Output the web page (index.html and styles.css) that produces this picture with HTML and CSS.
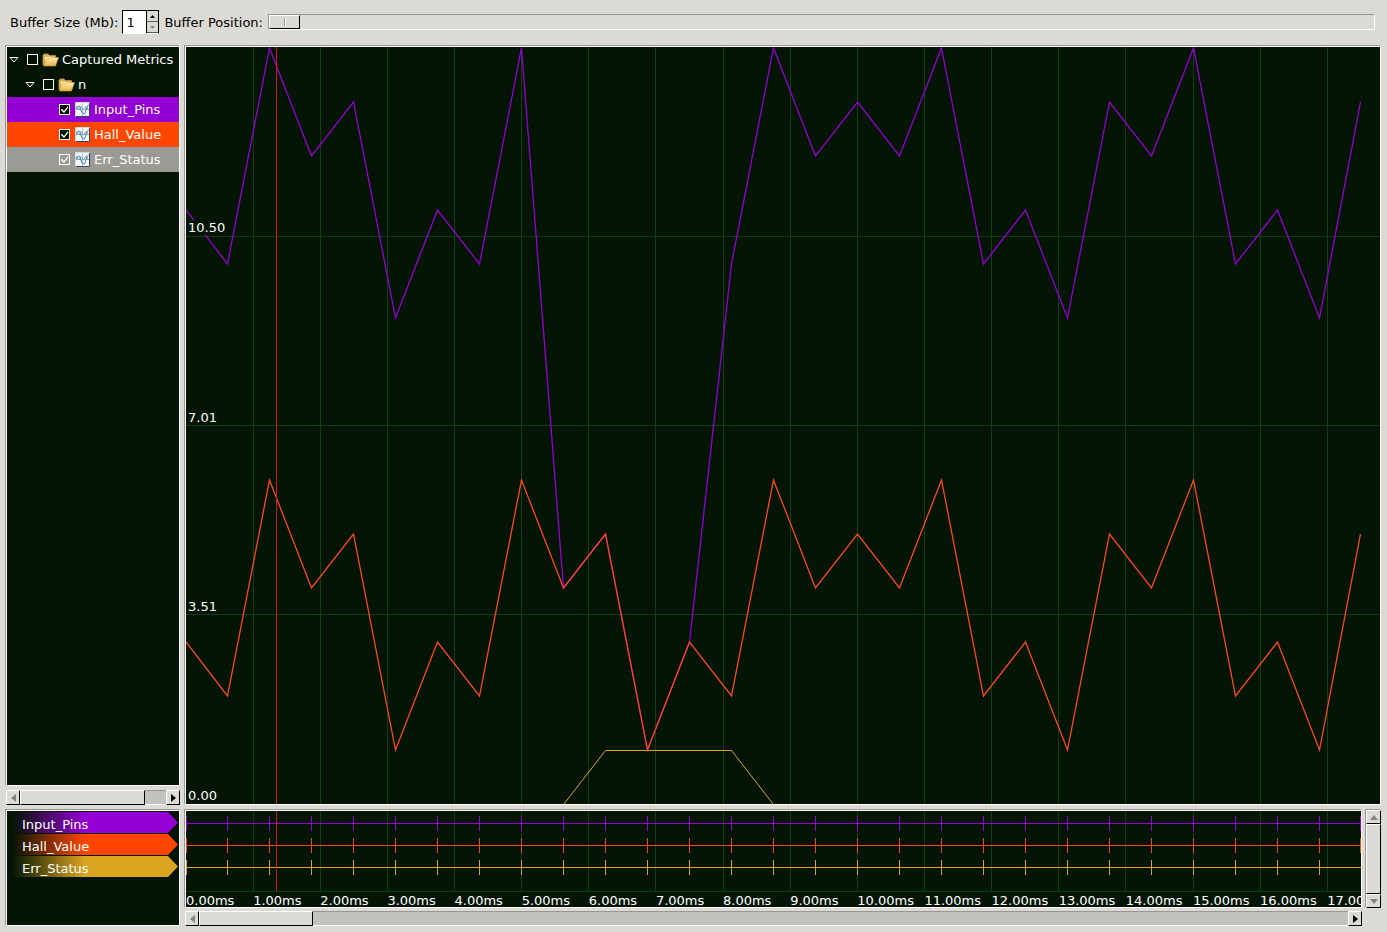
FILE: index.html
```html
<!DOCTYPE html>
<html lang="en">
<head>
<meta charset="utf-8">
<title>Captured Metrics</title>
<link rel="stylesheet" href="styles.css">
</head>
<body>
<svg class="defs" aria-hidden="true">
  <defs>
    <linearGradient id="folder-front" x1="0" y1="0" x2="0" y2="1">
      <stop offset="0" stop-color="#fff0a8"/>
      <stop offset="1" stop-color="#e8b04a"/>
    </linearGradient>
    <symbol id="folder" viewBox="0 0 17 14">
      <path d="M1 12V2.500L2 1H6L7.500 2.500H13.500V6" fill="#e3b358" stroke="#c08c34" stroke-width=".8"/>
      <path d="M3 4H13V7H3Z" fill="#fdf6d8"/>
      <path d="M1.500 13L4.500 5.500H8L9 4.500H16.500L13.500 13Z" fill="url(#folder-front)" stroke="#c8953a" stroke-width=".6"/>
    </symbol>
    <symbol id="signal" viewBox="0 0 15 15">
      <path d="M.5 .5H14.500V14.500H.5Z" fill="#f4f8fc" stroke="#cfd8e2"/>
      <path d="M14.500 1V14.500H1" fill="none" stroke="#39435c"/>
      <path d="M1 7.500H14M7.500 1V14" stroke="#b9c6d6" fill="none"/>
      <path d="M1.500 7.500C2.500 3 4.500 3 5.500 6.500S7.500 12 9 12 11.500 3.500 13.500 3" stroke="#2f6fb4" fill="none"/>
      <path d="M1.500 4.500L4 8L6 4.500L8.500 8L11 4.500L13.500 8" stroke="#58867f" stroke-width=".7" fill="none"/>
    </symbol>
  </defs>
</svg>

<header class="toolbar">
  <label for="size">Buffer Size (Mb):</label>
  <div class="spin">
    <input id="size" type="text" inputmode="numeric" value="1">
    <div class="spin-buttons">
      <button type="button" aria-label="Increase"><svg viewBox="0 0 5 3"><path d="M0 3L2.500 0L5 3Z"/></svg></button>
      <button type="button" aria-label="Decrease" disabled><svg viewBox="0 0 5 3"><path d="M0 0H5L2.500 3Z"/></svg></button>
    </div>
  </div>
  <label for="position">Buffer Position:</label>
  <input id="position" class="slider" type="range" min="0" max="100" value="0">
</header>

<main class="workspace">
  <section class="side">
    <div class="well tree">
      <div class="row">
        <svg class="expander" viewBox="0 0 10 6"><path d="M1 .5H9L5 5Z"/></svg>
        <label><input type="checkbox"><svg class="folder"><use href="#folder"/></svg>Captured Metrics</label>
      </div>
      <div class="row child">
        <svg class="expander" viewBox="0 0 10 6"><path d="M1 .5H9L5 5Z"/></svg>
        <label><input type="checkbox"><svg class="folder"><use href="#folder"/></svg>n</label>
      </div>
      <div class="row leaf violet"><label><input type="checkbox" checked><svg class="signal"><use href="#signal"/></svg>Input_Pins</label></div>
      <div class="row leaf orange"><label><input type="checkbox" checked><svg class="signal"><use href="#signal"/></svg>Hall_Value</label></div>
      <div class="row leaf muted"><label><input type="checkbox" checked><svg class="signal"><use href="#signal"/></svg>Err_Status</label></div>
    </div>
    <div class="scroll tree-scroll">
      <button type="button" aria-label="Scroll left" disabled><svg viewBox="0 0 5 8"><path d="M5 0V8L0 4Z"/></svg></button>
      <div class="thumb"></div>
      <div class="track"></div>
      <button type="button" aria-label="Scroll right"><svg viewBox="0 0 5 8"><path d="M0 0V8L5 4Z"/></svg></button>
    </div>
  </section>

  <section class="well chart">
    <svg viewBox="0 0 1194 757" preserveAspectRatio="none">
      <path class="grid" d="M67.500 0V757M134.500 0V757M201.500 0V757M268.500 0V757M335.500 0V757M402.500 0V757M469.500 0V757M537.500 0V757M604.500 0V757M671.500 0V757M738.500 0V757M805.500 0V757M872.500 0V757M939.500 0V757M1007.500 0V757M1074.500 0V757M1141.500 0V757M0 189.500H1194M0 378.500H1194M0 567.500H1194"/>
      <polyline class="line-violet" points="0,163 41.5,217 83.5,1 125.5,109 167.5,55 209.5,271 251.5,163 293.5,217 335.5,1 377.5,541 419.5,487 461.5,703 503.5,595 545.5,217 587.5,1 629.5,109 671.5,55 713.5,109 755.5,1 797.5,217 839.5,163 881.5,271 923.5,55 965.5,109 1007.5,1 1049.5,217 1091.5,163 1133.5,271 1174.5,55"/>
      <polyline class="line-yellow" points="0,757.5 377.5,757.5 419.5,703.5 545.5,703.5 587.5,757.5 1174.5,757.5"/>
      <polyline class="line-orange" points="0,595 41.5,649 83.5,433 125.5,541 167.5,487 209.5,703 251.5,595 293.5,649 335.5,433 377.5,541 419.5,487 461.5,703 503.5,595 545.5,649 587.5,433 629.5,541 671.5,487 713.5,541 755.5,433 797.5,649 839.5,595 881.5,703 923.5,487 965.5,541 1007.5,433 1049.5,649 1091.5,595 1133.5,703 1174.5,487"/>
      <path class="cursor" d="M90.500 0V757"/>
    </svg>
    <div class="values"><span>10.50</span><span>7.01</span><span>3.51</span><span>0.00</span></div>
  </section>

  <section class="well flags">
    <div class="flag flag-violet">Input_Pins</div>
    <div class="flag flag-orange">Hall_Value</div>
    <div class="flag flag-yellow">Err_Status</div>
  </section>

  <section class="timeline">
    <div class="well strip">
      <svg viewBox="0 0 1175 81" preserveAspectRatio="none">
        <defs>
          <path id="ticks" d="M0 0h1v15h-1zM41 0h1v15h-1zM83 0h1v15h-1zM125 0h1v15h-1zM167 0h1v15h-1zM209 0h1v15h-1zM251 0h1v15h-1zM293 0h1v15h-1zM335 0h1v15h-1zM377 0h1v15h-1zM419 0h1v15h-1zM461 0h1v15h-1zM503 0h1v15h-1zM545 0h1v15h-1zM587 0h1v15h-1zM629 0h1v15h-1zM671 0h1v15h-1zM713 0h1v15h-1zM755 0h1v15h-1zM797 0h1v15h-1zM839 0h1v15h-1zM881 0h1v15h-1zM923 0h1v15h-1zM965 0h1v15h-1zM1007 0h1v15h-1zM1049 0h1v15h-1zM1091 0h1v15h-1zM1133 0h1v15h-1z"/>
        </defs>
        <path class="grid" d="M67.500 0V81M134.500 0V81M201.500 0V81M268.500 0V81M335.500 0V81M402.500 0V81M469.500 0V81M537.500 0V81M604.500 0V81M671.500 0V81M738.500 0V81M805.500 0V81M872.500 0V81M939.500 0V81M1007.500 0V81M1074.500 0V81M1141.500 0V81M0 80.500H1175"/>
        <g class="trace trace-violet"><rect y="12" width="1175" height="1"/><use href="#ticks" y="5"/><rect x="1174" y="5" width="1" height="15"/></g>
        <g class="trace trace-orange"><rect y="34" width="1175" height="1"/><use href="#ticks" y="27"/><rect x="1174" y="27" width="1" height="15"/></g>
        <g class="trace trace-yellow"><rect y="56" width="1175" height="1"/><use href="#ticks" y="49"/></g>
        <path class="cursor" d="M90.500 0V80"/>
      </svg>
      <div class="times"><span>0.00ms</span><span>1.00ms</span><span>2.00ms</span><span>3.00ms</span><span>4.00ms</span><span>5.00ms</span><span>6.00ms</span><span>7.00ms</span><span>8.00ms</span><span>9.00ms</span><span>10.00ms</span><span>11.00ms</span><span>12.00ms</span><span>13.00ms</span><span>14.00ms</span><span>15.00ms</span><span>16.00ms</span><span>17.00</span></div>
    </div>
    <div class="scroll vertical">
      <button type="button" aria-label="Scroll up" disabled><svg viewBox="0 0 8 5"><path d="M0 5L4 0L8 5Z"/></svg></button>
      <div class="thumb"></div>
      <button type="button" aria-label="Scroll down" disabled><svg viewBox="0 0 8 5"><path d="M0 0H8L4 5Z"/></svg></button>
    </div>
    <div class="scroll time-scroll">
      <button type="button" aria-label="Scroll back" disabled><svg viewBox="0 0 5 8"><path d="M5 0V8L0 4Z"/></svg></button>
      <div class="thumb"></div>
      <div class="track"></div>
      <button type="button" aria-label="Scroll forward"><svg viewBox="0 0 5 8"><path d="M0 0V8L5 4Z"/></svg></button>
    </div>
  </section>
</main>
</body>
</html>
```
FILE: styles.css
```css
:root {
  --face: #dcdad5;
  --shade: #98968f;
  --trough: #c4c2bd;
  --screen: #051505;
  --violet: #9400d3;
  --orange: #ff4500;
  --yellow: #daa520;
}

* { box-sizing: border-box; }

body {
  margin: 0;
  height: 100vh;
  display: flex;
  flex-direction: column;
  background: var(--face);
  color: #000;
  font: 13px/15px "DejaVu Sans", sans-serif;
  overflow: hidden;
}

svg { display: block; }
.defs { position: absolute; width: 0; height: 0; }

input, button { font: inherit; margin: 0; padding: 0; border-radius: 0; }

/* Toolbar */
.toolbar {
  height: 46px;
  flex: none;
  display: flex;
  align-items: center;
  padding: 0 12px 2px 10px;
  white-space: nowrap;
}

.spin {
  display: flex;
  width: 37px;
  height: 24px;
  margin: 0 5px 0 4px;
  border: 1px solid #000;
  border-bottom-color: #fff;
  background: #fff;
}
.spin input {
  flex: 1;
  min-width: 0;
  border: 0;
  padding-left: 3px;
  background: #fff;
  outline: 0;
}
.spin-buttons {
  width: 12px;
  display: flex;
  flex-direction: column;
  border-left: 1px solid #000;
}
.spin-buttons button {
  flex: 1;
  min-height: 0;
  display: grid;
  place-items: center;
  border: 0;
  border-bottom: 1px solid #5f5d58;
  background: var(--face);
}
.spin-buttons svg { width: 5px; height: 3px; }
button:disabled path { fill: #85837d; }

.slider {
  appearance: none;
  flex: 1;
  min-width: 0;
  height: 16px;
  margin-left: 5px;
  border: 1px solid #fff;
  border-top-color: var(--shade);
  border-left-color: var(--shade);
  background: var(--face);
}
.slider::-webkit-slider-thumb {
  appearance: none;
  width: 31px;
  height: 14px;
  border: 1px solid #000;
  border-top-color: #fff;
  border-left-color: #fff;
  background:
    linear-gradient(var(--shade), var(--shade)) 14px 2px / 1px 8px no-repeat,
    linear-gradient(#fff, #fff) 15px 2px / 1px 8px no-repeat,
    var(--face);
}

/* Panels */
.workspace {
  flex: 1;
  min-height: 0;
  display: grid;
  grid-template-columns: 174px minmax(0, 1fr);
  grid-template-rows: minmax(0, 1fr) auto;
  gap: 5px;
  padding: 0 6px 6px;
}
.well {
  border: 1px solid #fff;
  box-shadow: -1px -1px 0 var(--shade);
  background: var(--screen);
  color: #fff;
  overflow: hidden;
}
.side { display: flex; flex-direction: column; gap: 4px; min-height: 0; }

/* Metric tree */
.tree { flex: 1; min-height: 0; }
.row {
  display: flex;
  align-items: center;
  height: 25px;
  padding-left: 2px;
  white-space: nowrap;
}
.row.child { padding-left: 18px; }
.row.leaf { padding-left: 52px; }
.row label { display: flex; align-items: center; }
.violet { background: var(--violet); }
.orange { background: var(--orange); }
.muted { background: #9c9a94; }
.expander { width: 10px; height: 6px; margin-right: 8px; fill: none; stroke: #fff; }
.folder { width: 17px; height: 14px; margin: 0 3px 0 4px; }
.signal { width: 15px; height: 15px; margin: 0 4px 0 5px; }
.row input {
  appearance: none;
  width: 11px;
  height: 11px;
  border: 1px solid #fff;
  background: var(--screen);
}
.muted input { background: transparent; }
.row input:checked::before {
  content: "";
  display: block;
  width: 9px;
  height: 9px;
  background: #fff;
  clip-path: polygon(1px 4px, 2px 4px, 4px 6px, 8px 1px, 8px 3px, 4px 8px, 1px 5px);
}

/* Scroll bars */
.scroll { display: flex; height: 15px; background: var(--trough); }
.scroll button {
  flex: none;
  width: 14px;
  display: grid;
  place-items: center;
}
.scroll button, .thumb {
  border: 1px solid #000;
  border-top-color: #fff;
  border-left-color: #fff;
  background: var(--face);
}
.scroll svg { width: 5px; height: 8px; }
.track { flex: 1; border-top: 1px solid var(--shade); border-bottom: 1px solid #fff; }
.tree-scroll .thumb { width: 125px; }
.time-scroll { grid-column: 1; }
.time-scroll .thumb { width: 114px; }
.scroll.vertical { flex-direction: column; height: auto; box-shadow: -1px -1px 0 var(--shade); }
.vertical .thumb { flex: 1; }
.vertical button { width: auto; height: 14px; }
.vertical svg { width: 8px; height: 5px; }

/* Plot */
.chart { display: grid; min-height: 0; }
.chart > svg, .values { grid-area: 1 / 1; width: 100%; height: 100%; min-height: 0; }
.chart path, .chart polyline, .grid, .cursor { fill: none; vector-effect: non-scaling-stroke; }
.grid { stroke: #0f4013; }
.cursor { stroke: #d81414; }
.line-violet { stroke: var(--violet); }
.line-orange { stroke: #ff4a14; }
.line-yellow { stroke: var(--yellow); }
.chart polyline.line-violet, .chart polyline.line-orange { stroke-width: 1.3; }

.values {
  display: grid;
  grid-template-rows: repeat(4, 1fr);
  align-items: end;
  justify-items: start;
}
.values span { padding: 0 2px; margin-bottom: 1px; background: var(--screen); }

/* Flags */
.flags { padding-top: 1px; display: flex; flex-direction: column; gap: 1px; }
.flag {
  height: 21px;
  margin-right: 1px;
  padding: 5px 0 0 15px;
  clip-path: polygon(0 0, calc(100% - 10px) 0, 100% 50%, calc(100% - 10px) 100%, 0 100%);
}
.flag-violet { background: linear-gradient(90deg, var(--screen) 5px, var(--violet) 78px); }
.flag-orange { background: linear-gradient(90deg, var(--screen) 5px, var(--orange) 78px); }
.flag-yellow { background: linear-gradient(90deg, var(--screen) 5px, var(--yellow) 78px); }

/* Timeline */
.timeline {
  display: grid;
  grid-template-columns: minmax(0, 1fr) 15px;
  gap: 3px 4px;
}
.strip { height: 98px; }
.strip > svg { width: 100%; height: 81px; }
.trace { shape-rendering: crispEdges; }
.trace-violet { fill: var(--violet); }
.trace-orange { fill: var(--orange); }
.trace-yellow { fill: var(--yellow); }
.times { display: flex; padding-top: 1px; white-space: nowrap; }
.times span { flex: 0 0 5.713%; width: 0; }
```
